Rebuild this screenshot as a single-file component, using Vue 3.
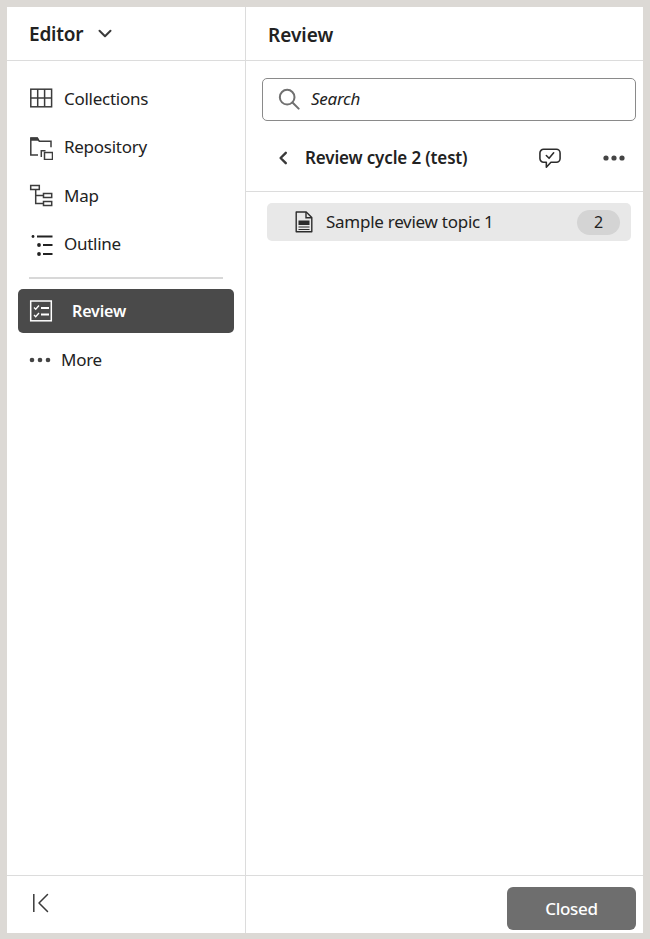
<script setup>
const rows = [
  { label: 'Collections', icon: 'grid' },
  { label: 'Repository', icon: 'folder' },
  { label: 'Map', icon: 'map' },
  { label: 'Outline', icon: 'outline' },
]
</script>

<template>
  <div class="frame">
    <aside class="side">
      <header class="side-head">
        <span class="editor">Editor</span>
        <svg class="chev" width="14" height="10" viewBox="0 0 14 10"><path d="M1.500 1.800 7 7.300l5.500-5.500" fill="none" stroke="#3a3a3a" stroke-width="2" stroke-linecap="round" stroke-linejoin="round"/></svg>
      </header>
      <nav class="nav">
        <div v-for="r in rows" :key="r.label" class="row">
          <svg class="ico" width="24" height="24" viewBox="0 0 24 24" fill="none" stroke="#3c3c3c" stroke-width="1.500">
            <template v-if="r.icon === 'grid'">
              <rect x="1.800" y="2.200" width="20.800" height="17.600" />
              <path d="M8.700 2.200v17.600M15.600 2.200v17.600M1.800 11h20.800" />
            </template>
            <template v-else-if="r.icon === 'folder'">
              <path d="M9 19H1.800V2h6.500l2 3.300H22v6" />
              <path d="M1.800 1.500h6.800l2 3.300H1.800z" fill="#3c3c3c" stroke="none" />
              <path d="M12.300 21v-6.300h4.200" />
              <rect x="15.500" y="16.500" width="8" height="7" />
            </template>
            <template v-else-if="r.icon === 'map'">
              <rect x="1.700" y="1.500" width="8.600" height="4" />
              <rect x="14.500" y="9.500" width="8.200" height="4" />
              <rect x="14.500" y="17.500" width="8.200" height="4" />
              <path d="M6.700 5.500v14h7.800M6.700 11.500h7.800" />
            </template>
            <template v-else>
              <circle cx="4" cy="3.500" r="1.400" fill="#222" stroke="none" />
              <circle cx="10" cy="12" r="1.900" fill="#222" stroke="none" />
              <circle cx="10" cy="21" r="1.900" fill="#222" stroke="none" />
              <path d="M8 3.500h15.500M14 12h9.500M14 21h9.500" stroke="#222" stroke-width="2.200" />
            </template>
          </svg>
          <span class="label">{{ r.label }}</span>
        </div>
        <div class="rule"></div>
        <div class="row active">
          <svg width="24" height="24" viewBox="0 0 24 24" fill="none" stroke="#fff" stroke-width="1.500">
            <rect x="1.700" y="2" width="20.600" height="19.800" />
            <path d="M5 8.500l1.700 1.800L10 6.500M5 16l1.700 1.800L10 14" stroke-width="1.300" />
            <path d="M12 9h8M12 15.500h8" stroke-width="2.200" />
          </svg>
          <span>Review</span>
        </div>
        <div class="row more">
          <svg width="22" height="6" viewBox="0 0 22 6" fill="#444"><circle cx="3" cy="3" r="2.300"/><circle cx="11" cy="3" r="2.300"/><circle cx="19" cy="3" r="2.300"/></svg>
          <span class="label">More</span>
        </div>
      </nav>
      <footer class="side-foot">
        <svg width="18" height="20" viewBox="0 0 18 20" fill="none" stroke="#3a3a3a" stroke-width="1.500"><path d="M1.800 1v18"/><path d="M15.500 1.500 7 10l8.500 8.500" stroke-linecap="round" stroke-linejoin="round"/></svg>
      </footer>
    </aside>

    <main class="main">
      <header class="main-head">Review</header>
      <div class="search">
        <svg width="22" height="22" viewBox="0 0 24 24" fill="none" stroke="#707070" stroke-width="2.200"><circle cx="10" cy="10" r="8"/><path d="M15.800 15.800 22.500 22.500" stroke-linecap="round"/></svg>
        <span>Search</span>
      </div>
      <div class="cycle">
        <svg class="back" width="10" height="14" viewBox="0 0 10 14"><path d="M7.800 1.800 2.600 7l5.200 5.200" fill="none" stroke="#3a3a3a" stroke-width="2.400" stroke-linecap="round" stroke-linejoin="round"/></svg>
        <span class="cycle-title">Review cycle 2 (test)</span>
        <svg class="bubble" width="22" height="21" viewBox="0 0 24 22" fill="none" stroke="#2c2c2c" stroke-width="1.700" stroke-linejoin="round"><path d="M5 1h14a4 4 0 0 1 4 4v6a4 4 0 0 1-4 4h-6l-5 5.500V15H5a4 4 0 0 1-4-4V5a4 4 0 0 1 4-4z"/><path d="M8 7.800l3 3 5-6" stroke-linecap="round"/></svg>
        <svg width="22" height="6" viewBox="0 0 22 6" fill="#444"><circle cx="3" cy="3" r="2.600"/><circle cx="11" cy="3" r="2.600"/><circle cx="19" cy="3" r="2.600"/></svg>
      </div>
      <div class="list">
        <div class="topic">
          <svg width="18" height="22" viewBox="0 0 18 22" fill="none" stroke="#2c2c2c" stroke-width="1.400"><path d="M1.200 1h10l5.600 5.600V20.800H1.200z" stroke-linejoin="round"/><path d="M11 1v5.800h5.800"/><rect x="3.500" y="9.500" width="11" height="4.500" fill="#2c2c2c" stroke="none"/><path d="M3.500 16h11M3.500 18.500h11" stroke-width="1.100"/></svg>
          <span class="topic-name">Sample review topic 1</span>
          <span class="badge">2</span>
        </div>
      </div>
      <footer class="main-foot">
        <button class="closed" type="button">Closed</button>
      </footer>
    </main>
  </div>
</template>

<style>
html, body { margin: 0; padding: 0; }
</style>

<style scoped>
.frame {
  box-sizing: border-box;
  width: 650px;
  height: 939px;
  border: 7px solid #dcd9d5;
  border-bottom-width: 6px;
  background: #fff;
  display: flex;
  font-family: "Noto Sans", "Open Sans", sans-serif;
  font-size: 17px;
  color: #222;
  letter-spacing: -0.27px;
}
.side {
  box-sizing: border-box;
  width: 239px;
  flex: none;
  border-right: 1px solid #dcdcdc;
  display: flex;
  flex-direction: column;
}
.side-head {
  box-sizing: border-box;
  height: 54px;
  border-bottom: 1px solid #dcdcdc;
  display: flex;
  align-items: center;
  padding: 1px 0 0 22px;
  gap: 15px;
}
.editor { font-size: 19px; font-weight: 600; letter-spacing: -0.2px; }
.nav { flex: 1; padding: 14px 11px 0; }
.row {
  height: 48.5px;
  display: flex;
  align-items: center;
  gap: 11px;
}
.label { padding-bottom: 2px; }
.ico { margin-left: 11px; flex: none; }
.rule { height: 2px; background: #d8d8d8; margin: 8px 11px 10px; }
.active {
  height: 44px;
  background: #4a4a4a;
  color: #fff;
  border-radius: 5px;
  font-size: 16px;
  font-weight: 600;
  letter-spacing: -0.15px;
  padding-left: 11px;
  gap: 19px;
}
.more { margin-top: 3px; padding-left: 11px; gap: 10px; }
.side-foot {
  box-sizing: border-box;
  height: 58px;
  border-top: 1px solid #dcdcdc;
  padding: 17px 0 0 25px;
}
.main { flex: 1; display: flex; flex-direction: column; min-width: 0; }
.main-head {
  box-sizing: border-box;
  height: 54px;
  border-bottom: 1px solid #dcdcdc;
  display: flex;
  align-items: center;
  padding: 3px 0 0 22px;
  font-size: 19px;
  font-weight: 600;
  letter-spacing: 0;
}
.search {
  box-sizing: border-box;
  height: 43px;
  margin: 17px 7px 0 16px;
  border: 1px solid #8a8a8a;
  border-radius: 5px;
  display: flex;
  align-items: center;
  padding: 0 0 2px 15px;
  gap: 11px;
  font-style: italic;
}
.cycle {
  box-sizing: border-box;
  height: 71px;
  border-bottom: 1px solid #dcdcdc;
  display: flex;
  align-items: center;
  padding: 3px 18px 0 32px;
}
.cycle-title { margin-left: 17px; font-weight: 600; flex: 1; letter-spacing: -0.15px; }
.bubble { margin: 1px 42px 0 0; }
.list { flex: 1; padding: 11px 12px 0 21px; }
.topic {
  height: 38px;
  background: #e8e8e8;
  border-radius: 5px;
  display: flex;
  align-items: center;
  padding: 0 11px 0 28px;
}
.topic-name { margin-left: 13px; flex: 1; padding-bottom: 2px; }
.badge {
  width: 43px;
  height: 25px;
  border-radius: 13px;
  background: #d4d4d4;
  display: flex;
  align-items: center;
  justify-content: center;
  font-size: 16px;
}
.main-foot {
  box-sizing: border-box;
  height: 58px;
  border-top: 1px solid #dcdcdc;
  padding: 11px 7px 0 0;
  display: flex;
  justify-content: flex-end;
}
.closed {
  width: 129px;
  height: 43px;
  border: 0;
  border-radius: 6px;
  background: #6e6e6e;
  color: #fff;
  font: inherit;
  font-weight: 500;
  letter-spacing: inherit;
}
</style>
